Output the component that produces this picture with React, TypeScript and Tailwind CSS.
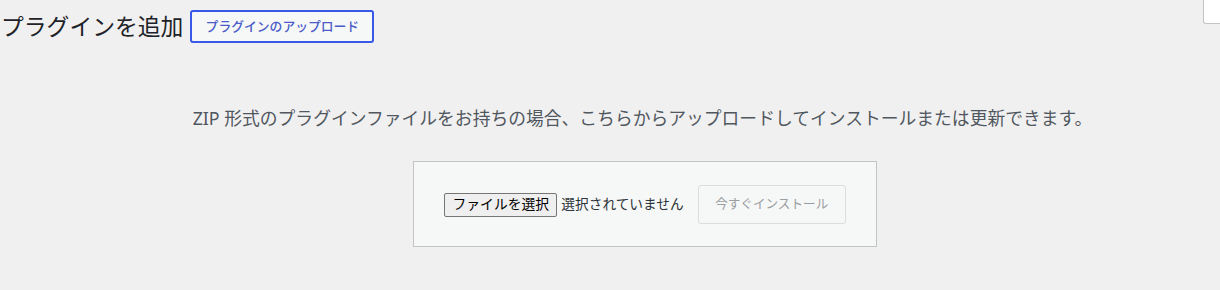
export default function App() {
  const font = "font-['Noto_Sans','Noto_Sans_CJK_JP',sans-serif]"

  return (
    <div className={`relative min-h-[290px] bg-[#f0f0f1] ${font}`}>
      {/* ヘルプタブの端 */}
      <div className="absolute right-0 top-0 h-[24px] w-[17px] rounded-bl-[3px] border-b border-l border-[#c3c4c7] bg-white" />

      {/* ページタイトル */}
      <div className="flex items-center pl-[1px] pt-[10px]">
        <h1 className="text-[22.8px] leading-[33px] font-normal text-[#1d2327]">プラグインを追加</h1>
        <button className="ml-[7px] flex h-[33px] w-[184px] items-center justify-center rounded-[3px] border-2 border-[#3858e9] bg-[#f6f7f7] text-[12.8px] font-medium text-[#4b5cc9]">
          プラグインのアップロード
        </button>
      </div>

      {/* 説明 */}
      <div className="pl-[65px] pt-[63px]">
        <p className="text-center text-[17.8px] leading-[24px] text-[#50575e]">
          ZIP 形式のプラグインファイルをお持ちの場合、こちらからアップロードしてインストールまたは更新できます。
        </p>
      </div>

      {/* アップロードフォーム */}
      <div className="flex justify-center pl-[70px] pt-[31px]">
        <div className="flex h-[86px] w-[464px] items-center justify-center border border-[#c3c4c7] bg-[#f6f7f7]">
          <div className="mt-[1px] flex items-center">
            <button className="flex h-[24px] w-[113px] items-center justify-center rounded-[2px] border border-[#767676] bg-[#efefef] text-[13.8px] text-black">
              ファイルを選択
            </button>
            <span className="ml-[4px] text-[13.7px] text-[#2c3338]">選択されていません</span>
          </div>
          <button className="ml-[14px] flex h-[39px] w-[148px] items-center justify-center rounded-[3px] border border-[#dcdcde] bg-[#f6f7f7] text-[12.6px] text-[#9a9da1]">
            今すぐインストール
          </button>
        </div>
      </div>
    </div>
  )
}
